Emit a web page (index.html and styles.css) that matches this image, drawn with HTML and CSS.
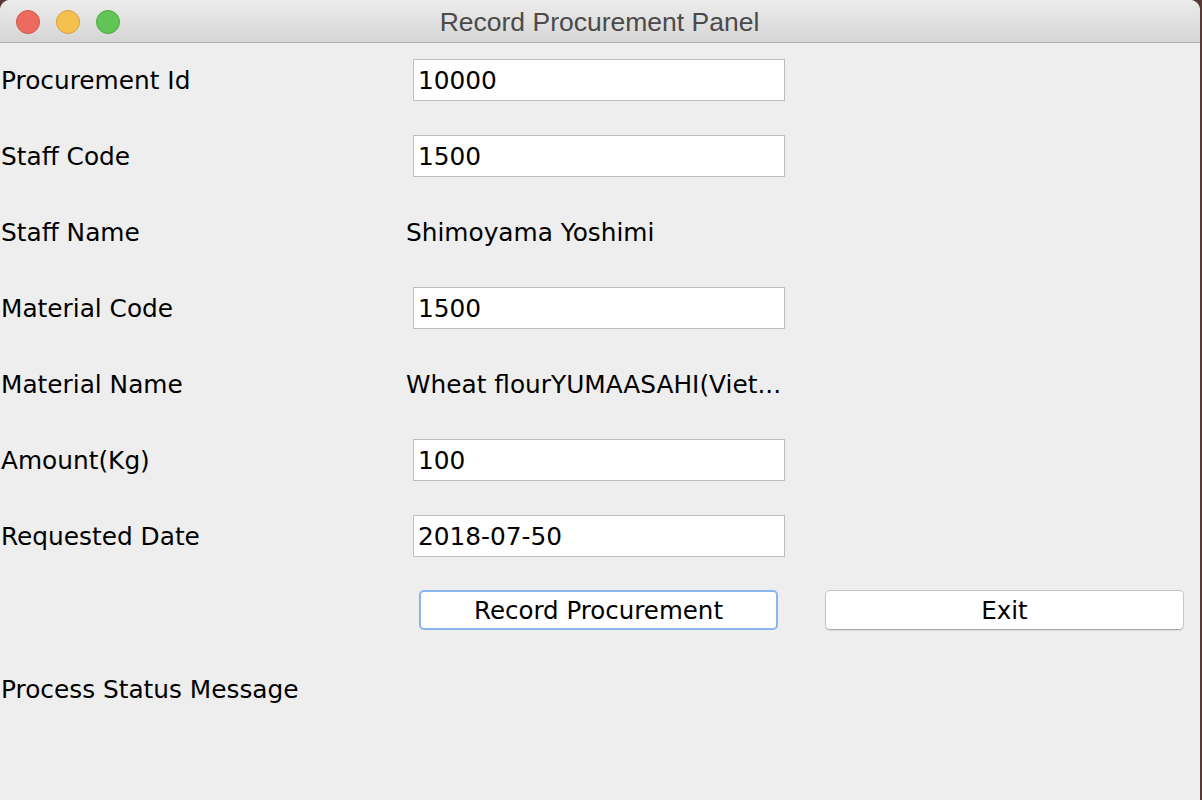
FILE: index.html
```html
<!DOCTYPE html>
<html>
<head>
<meta charset="utf-8">
<title>Record Procurement Panel</title>
<link rel="stylesheet" href="styles.css">
</head>
<body>
<div class="window">
  <div class="titlebar">
    <div class="lights">
      <span class="light red"></span>
      <span class="light yellow"></span>
      <span class="light green"></span>
    </div>
    <div class="title">Record Procurement Panel</div>
  </div>
  <div class="form">
    <div class="row">
      <div class="label">Procurement Id</div>
      <div class="field">10000</div>
    </div>
    <div class="row">
      <div class="label">Staff Code</div>
      <div class="field">1500</div>
    </div>
    <div class="row">
      <div class="label">Staff Name</div>
      <div class="value">Shimoyama Yoshimi</div>
    </div>
    <div class="row">
      <div class="label">Material Code</div>
      <div class="field">1500</div>
    </div>
    <div class="row">
      <div class="label">Material Name</div>
      <div class="value">Wheat flourYUMAASAHI(Viet...</div>
    </div>
    <div class="row">
      <div class="label">Amount(Kg)</div>
      <div class="field">100</div>
    </div>
    <div class="row">
      <div class="label">Requested Date</div>
      <div class="field">2018-07-50</div>
    </div>
    <div class="buttons">
      <button class="btn focused">Record Procurement</button>
      <button class="btn">Exit</button>
    </div>
    <div class="status">Process Status Message</div>
  </div>
</div>
</body>
</html>
```
FILE: styles.css
```css
html, body {
  margin: 0;
  padding: 0;
}
body {
  background: #5a3a36;
  width: 1202px;
  height: 800px;
  overflow: hidden;
  font-family: "DejaVu Sans", "Liberation Sans", sans-serif;
}
.window {
  width: 1200px;
  height: 800px;
  background: #eeeeee;
  border-radius: 10px 10px 0 0;
  overflow: hidden;
}
.titlebar {
  height: 42px;
  border-bottom: 1px solid #afafaf;
  background: linear-gradient(#ececec, #d6d6d6);
  display: flex;
  align-items: center;
  justify-content: center;
  position: relative;
}
.lights {
  position: absolute;
  left: 16px;
  top: 10px;
  display: flex;
  gap: 16px;
}
.light {
  width: 22px;
  height: 22px;
  border-radius: 50%;
  border: 1px solid;
}
.red { background: #ed6a5e; border-color: #d4544a; }
.yellow { background: #f6c04f; border-color: #d8a23f; }
.green { background: #61c454; border-color: #4ca83e; }
.title {
  font-family: "Liberation Sans", Arial, sans-serif;
  font-size: 26.5px;
  color: #4a4a4a;
  margin-left: -1px;
  margin-top: 2px;
}
.form {
  display: flex;
  flex-direction: column;
  color: #000;
  font-size: 24.8px;
  margin-top: -1px;
}
.row {
  height: 76px;
  display: grid;
  grid-template-columns: 406px 372px;
  align-items: center;
}
.label {
  padding-left: 1px;
  white-space: nowrap;
}
.field {
  margin-left: 7px;
  border: 1px solid #bdbdbd;
  background: #fff;
  display: flex;
  align-items: center;
  padding-left: 4px;
  box-sizing: border-box;
  width: 372px;
  height: 42px;
}
.value {
  white-space: nowrap;
}
.buttons {
  height: 72px;
  display: flex;
  align-items: center;
  padding-left: 419px;
  gap: 47px;
}
.btn {
  font-family: "DejaVu Sans", "Liberation Sans", sans-serif;
  font-size: 24.5px;
  color: #000;
  background: #fff;
  border: 1px solid #c6c6c6;
  border-bottom-color: #a9a9a9;
  border-radius: 5px;
  height: 40px;
  width: 359px;
  padding: 0;
  box-shadow: 0 1px 1px rgba(0,0,0,0.08);
}
.btn.focused {
  border: 2px solid #8ab5ea;
  box-shadow: none;
}
.status {
  height: 86px;
  display: flex;
  align-items: center;
  padding-left: 1px;
}
```
